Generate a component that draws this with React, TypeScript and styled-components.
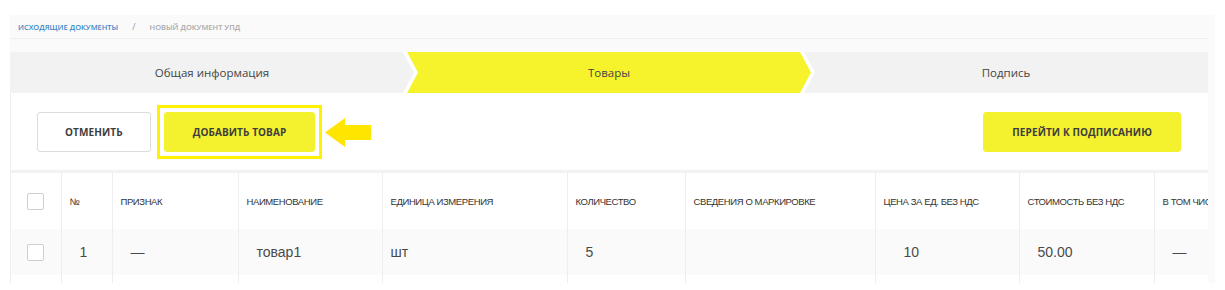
import React from 'react';
import styled, { createGlobalStyle } from 'styled-components';

const GlobalStyle = createGlobalStyle`
  html, body {
    margin: 0;
    padding: 0;
    background: #ffffff;
  }
  body {
    font-family: "Open Sans", "Liberation Sans", Arial, sans-serif;
  }
`;

const Page = styled.div`
  padding: 15px 0 0 10px;
  width: 1205px;
`;

const Shell = styled.div`
  background: #fafafa;
  padding-right: 7px;
`;

const Breadcrumbs = styled.div`
  height: 23px;
  display: flex;
  align-items: center;
  gap: 14px;
  padding-left: 8px;
  border-bottom: 1px solid #eeeeee;
  font-size: 7.5px;
  font-weight: 600;
  text-transform: uppercase;
`;

const Crumb = styled.span<{ $active?: boolean }>`
  color: ${(p) => (p.$active ? '#3c88c6' : '#a9a9a9')};
`;

const Slash = styled.span`
  color: #999999;
  font-weight: 400;
  font-size: 9px;
`;

const Body = styled.div`
  padding-top: 13px;
`;

const Stepper = styled.div`
  display: flex;
  height: 41px;
  background: #ffffff;
`;

const Step = styled.div<{ $active?: boolean; $first?: boolean; $last?: boolean }>`
  flex: 1;
  display: flex;
  align-items: center;
  justify-content: center;
  font-size: 11.5px;
  color: #444444;
  background: ${(p) => (p.$active ? '#f6f32d' : '#f2f2f2')};
  margin-left: ${(p) => (p.$first ? '0' : '-7px')};
  clip-path: ${(p) =>
    p.$first
      ? 'polygon(0 0, calc(100% - 11px) 0, 100% 50%, calc(100% - 11px) 100%, 0 100%)'
      : p.$last
      ? 'polygon(0 0, 100% 0, 100% 100%, 0 100%, 11px 50%)'
      : 'polygon(0 0, calc(100% - 11px) 0, 100% 50%, calc(100% - 11px) 100%, 0 100%, 11px 50%)'};
`;

const Card = styled.div`
  background: #ffffff;
  border-left: 1px solid #efefef;
`;

const Toolbar = styled.div`
  display: flex;
  align-items: center;
  height: 77px;
  padding: 0 27px 0 26px;
  border-bottom: 3px solid #f2f2f2;
`;

const Button = styled.button<{ $primary?: boolean }>`
  height: 40px;
  padding: 0 ${(p) => (p.$primary ? 28 : 27)}px;
  border-radius: 3px;
  border: 1px solid ${(p) => (p.$primary ? '#f4f12e' : '#dcdcdc')};
  background: ${(p) => (p.$primary ? '#f4f12e' : '#ffffff')};
  color: #3d3d3d;
  font-family: "Open Sans", "Liberation Sans", Arial, sans-serif;
  font-size: 10px;
  font-weight: 700;
  text-transform: uppercase;
  letter-spacing: 0.1px;
  display: block;
`;

/* yellow annotation frame drawn round the highlighted button */
const Marker = styled.div`
  margin: -7px -8px -7px 6px;
  padding: 4px;
  border: 3px solid #fff200;
`;

const Spacer = styled.div`
  flex: 1;
`;

const Pointer = styled.svg`
  margin-left: 11px;
  margin-top: 2px;
  flex-shrink: 0;
`;

const TableWrap = styled.div`
  overflow: hidden;
`;

const Table = styled.table`
  border-collapse: collapse;
  table-layout: fixed;
  width: 1298px;
  font-family: "Liberation Sans", Arial, sans-serif;
`;

const HeadCell = styled.th`
  height: 56px;
  padding: 0 0 0 8px;
  text-align: left;
  font-size: 9.5px;
  font-weight: 400;
  letter-spacing: -0.4px;
  color: #333333;
  text-transform: uppercase;
  white-space: nowrap;
  overflow: hidden;
  border-left: 1px solid #eeeeee;
  &:first-child {
    border-left: none;
  }
`;

const Row = styled.tr<{ $filled?: boolean }>`
  background: ${(p) => (p.$filled ? '#fafafa' : '#ffffff')};
`;

const Cell = styled.td<{ $indent?: number; $center?: boolean }>`
  height: 46px;
  padding: 0 0 0 ${(p) => p.$indent ?? 8}px;
  text-align: ${(p) => (p.$center ? 'center' : 'left')};
  font-size: 14px;
  color: #4a4a4a;
  white-space: nowrap;
  border-left: 1px solid #eeeeee;
  &:first-child {
    border-left: none;
  }
`;

const GapCell = styled.td`
  height: 8px;
  padding: 0;
  border-left: 1px solid #eeeeee;
  &:first-child {
    border-left: none;
  }
`;

const Check = styled.span`
  display: inline-block;
  width: 15px;
  height: 15px;
  border: 1px solid #cfcfcf;
  border-radius: 2px;
  background: #ffffff;
  vertical-align: middle;
`;

const columns = [
  { title: '', width: 50 },
  { title: '№', width: 51 },
  { title: 'Признак', width: 126 },
  { title: 'Наименование', width: 144 },
  { title: 'Единица измерения', width: 185 },
  { title: 'Количество', width: 118 },
  { title: 'Сведения о маркировке', width: 190 },
  { title: 'Цена за ед. без НДС', width: 144 },
  { title: 'Стоимость без НДС', width: 135 },
  { title: 'В том числе НДС', width: 155 },
];

const row = [
  { value: '1', indent: 18 },
  { value: '—', indent: 18 },
  { value: 'товар1', indent: 18 },
  { value: 'шт', indent: 8 },
  { value: '5', indent: 18 },
  { value: '', indent: 8 },
  { value: '10', indent: 28 },
  { value: '50.00', indent: 18 },
  { value: '—', indent: 18 },
];

export default function App() {
  return (
    <>
      <GlobalStyle />
      <Page>
        <Shell>
          <Breadcrumbs>
            <Crumb $active>Исходящие документы</Crumb>
            <Slash>/</Slash>
            <Crumb>Новый документ УПД</Crumb>
          </Breadcrumbs>
          <Body>
            <Stepper>
              <Step $first>Общая информация</Step>
              <Step $active>Товары</Step>
              <Step $last>Подпись</Step>
            </Stepper>
            <Card>
              <Toolbar>
                <Button>Отменить</Button>
                <Marker>
                  <Button $primary>Добавить товар</Button>
                </Marker>
                <Pointer width="46" height="29" viewBox="0 0 46 29">
                  <path d="M0 14.5 L20 0 L20 7 L46 7 L46 22 L20 22 L20 29 Z" fill="#ffe600" />
                </Pointer>
                <Spacer />
                <Button $primary>Перейти к подписанию</Button>
              </Toolbar>
              <TableWrap>
                <Table>
                  <colgroup>
                    {columns.map((c, i) => (
                      <col key={i} style={{ width: c.width }} />
                    ))}
                  </colgroup>
                  <thead>
                    <tr>
                      {columns.map((c, i) =>
                        i === 0 ? (
                          <HeadCell key={i} style={{ textAlign: 'center', padding: 0 }}>
                            <Check />
                          </HeadCell>
                        ) : (
                          <HeadCell key={i}>{c.title}</HeadCell>
                        )
                      )}
                    </tr>
                  </thead>
                  <tbody>
                    <Row $filled>
                      <Cell $center $indent={0}>
                        <Check />
                      </Cell>
                      {row.map((r, i) => (
                        <Cell key={i} $indent={r.indent}>
                          {r.value}
                        </Cell>
                      ))}
                    </Row>
                    <Row>
                      {columns.map((_, i) => (
                        <GapCell key={i} />
                      ))}
                    </Row>
                  </tbody>
                </Table>
              </TableWrap>
            </Card>
          </Body>
        </Shell>
      </Page>
    </>
  );
}
